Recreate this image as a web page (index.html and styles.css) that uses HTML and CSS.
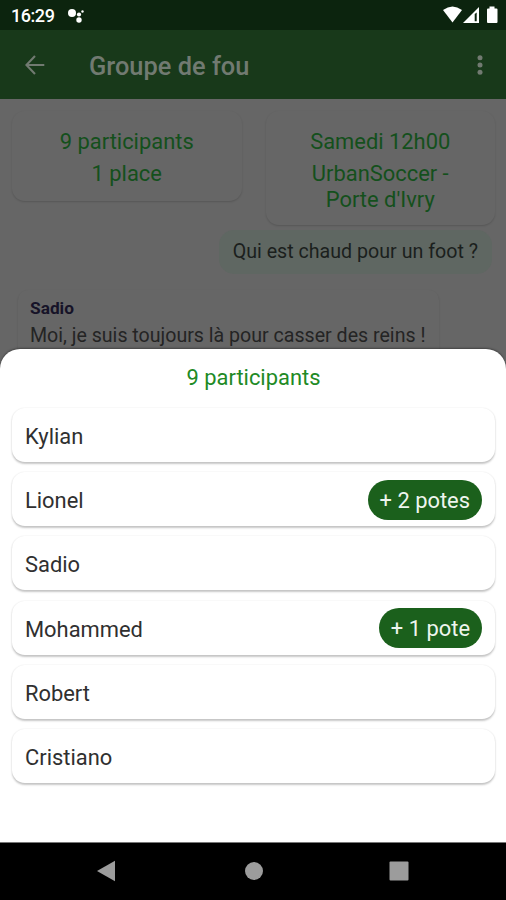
FILE: index.html
```html
<!DOCTYPE html>
<html lang="fr">
<head>
<meta charset="utf-8">
<title>Groupe de fou</title>
<link rel="stylesheet" href="styles.css">
</head>
<body>
<div class="screen">
  <div class="status">
    <span class="clock">16:29</span>
    <svg class="assistant" width="18" height="16" viewBox="0 0 18 16" fill="#fff"><circle cx="5" cy="5" r="4"/><circle cx="12" cy="6.500" r="2.100"/><circle cx="12" cy="12" r="2.700"/><circle cx="15.500" cy="3.500" r="1.200"/></svg>
    <svg class="signals" width="56" height="18" viewBox="0 0 56 18" fill="#fff"><path d="M0 4Q9.500-3 19 4L9.500 16.500Z"/><path fill-rule="evenodd" d="M20 17L36 1V17ZM31.700 8V15.200H33.700V6.500Z"/><path d="M46.500 2.500V.6H51.500V2.500H53.500Q54.500 2.500 54.500 3.500V16Q54.500 17 53.500 17H45Q44 17 44 16V3.500Q44 2.500 45 2.500Z"/></svg>
  </div>
  <header class="appbar">
    <svg class="back" width="20" height="20" viewBox="0 0 20 20" fill="none" stroke="#717a71" stroke-width="2.100"><path d="M19.300 10H1.800M10 1L1.400 10L10 19"/></svg>
    <h1>Groupe de fou</h1>
    <svg class="more" width="6" height="20" viewBox="0 0 6 20" fill="#717a71"><circle cx="3" cy="2.700" r="2.500"/><circle cx="3" cy="10" r="2.500"/><circle cx="3" cy="17.300" r="2.500"/></svg>
  </header>
  <main class="chat">
    <div class="cards">
      <div class="card"><p>9 participants</p><p>1 place</p></div>
      <div class="card"><p>Samedi 12h00</p><p>UrbanSoccer -<br>Porte d'Ivry</p></div>
    </div>
    <div class="mine">Qui est chaud pour un foot ?</div>
    <div class="theirs"><b>Sadio</b><span>Moi, je suis toujours là pour casser des reins !</span></div>
  </main>
  <section class="sheet">
    <h2>9 participants</h2>
    <ul>
      <li>Kylian</li>
      <li>Lionel<span class="badge">+ 2 potes</span></li>
      <li>Sadio</li>
      <li>Mohammed<span class="badge">+ 1 pote</span></li>
      <li>Robert</li>
      <li>Cristiano</li>
    </ul>
  </section>
  <nav class="navbar">
    <svg width="20" height="22" viewBox="0 0 20 22" fill="#9c9c9c"><path d="M1 11L19 .8V21.200Z"/></svg>
    <svg width="20" height="20" viewBox="0 0 20 20" fill="#9c9c9c"><circle cx="11" cy="10" r="9"/></svg>
    <svg width="20" height="20" viewBox="0 0 20 20" fill="#9c9c9c"><rect x=".5" y=".5" width="19" height="19" rx="1"/></svg>
  </nav>
</div>
</body>
</html>
```

FILE: styles.css
```css
* { box-sizing: border-box; margin: 0; padding: 0; }
body { background: #000; font-family: Roboto, "Liberation Sans", sans-serif; }
.screen { width: 506px; height: 900px; overflow: hidden; display: flex; flex-direction: column; background: #666; }
.status { height: 30px; flex: none; display: flex; align-items: center; padding: 2px 7px 0 11px; background: #0c240e; }
.clock { color: #fff; font-size: 18px; font-weight: 500; line-height: 28px; letter-spacing: -0.45px; }
.assistant { margin-left: 13px; }
.signals { margin-left: auto; margin-top: -3px; }
.appbar { height: 69px; flex: none; display: flex; align-items: center; padding: 0 23px 0 25px; background: #18391a; color: #717a71; }
.appbar h1 { margin-left: 44px; font-size: 25.4px; font-weight: 500; padding-top: 2px; }
.more { margin-left: auto; }
.chat { height: 250px; flex: none; display: flex; flex-direction: column; overflow: hidden; }
.cards { display: flex; align-items: flex-start; gap: 24px; padding: 12px 11px 0 12px; }
.card { width: 230px; border-radius: 13px; padding: 18px 20px 14px; text-align: center; color: #14501c; font-size: 21.9px; line-height: 26px; box-shadow: 0 1px 2px rgba(0, 0, 0, .16); }
.card p + p { margin-top: 6px; }
.card:last-child { padding-bottom: 12px; }
.mine { align-self: flex-end; margin: 5px 14px 0 0; height: 44px; padding: 0 14px; border-radius: 15px; background: #5f6762; color: #1b1f1d; font-size: 19.65px; line-height: 44px; white-space: nowrap; }
.theirs { align-self: flex-start; margin: 16px 0 0 18px; height: 80px; width: 421px; padding: 6px 12px; border-radius: 10px; font-size: 19.6px; color: #242424; white-space: nowrap; box-shadow: 0 1px 2px rgba(0, 0, 0, .16); }
.theirs b { display: block; color: #161328; font-size: 17.3px; line-height: 24px; }
.theirs span { display: block; line-height: 32px; }
.sheet { position: relative; height: 493px; flex: none; border-radius: 20px 20px 0 0; background: #fff; padding: 15px 11px 0 12px; box-shadow: 0 -1px 2px rgba(0, 0, 0, .35); }
.sheet h2 { text-align: center; font-size: 21.9px; line-height: 28px; font-weight: 400; color: #218a25; }
.sheet ul { list-style: none; display: flex; flex-direction: column; gap: 10.2px; margin-top: 16px; }
.sheet li { height: 54px; display: flex; align-items: center; justify-content: space-between; padding: 3px 13px 0; border-radius: 13px; color: #303030; font-size: 21.9px; box-shadow: 0 1.5px 2px rgba(0, 0, 0, .22), 0 0 2px rgba(0, 0, 0, .06); }
.badge { height: 40px; border-radius: 20px; background: #1b601c; color: #eef5ee; padding: 0 12px; line-height: 42px; margin-top: -2px; }
.navbar { position: relative; flex: 1; display: flex; align-items: center; justify-content: space-between; padding: 0 97px 1px 96px; background: #000; border-top: 1px solid #777; }
```
